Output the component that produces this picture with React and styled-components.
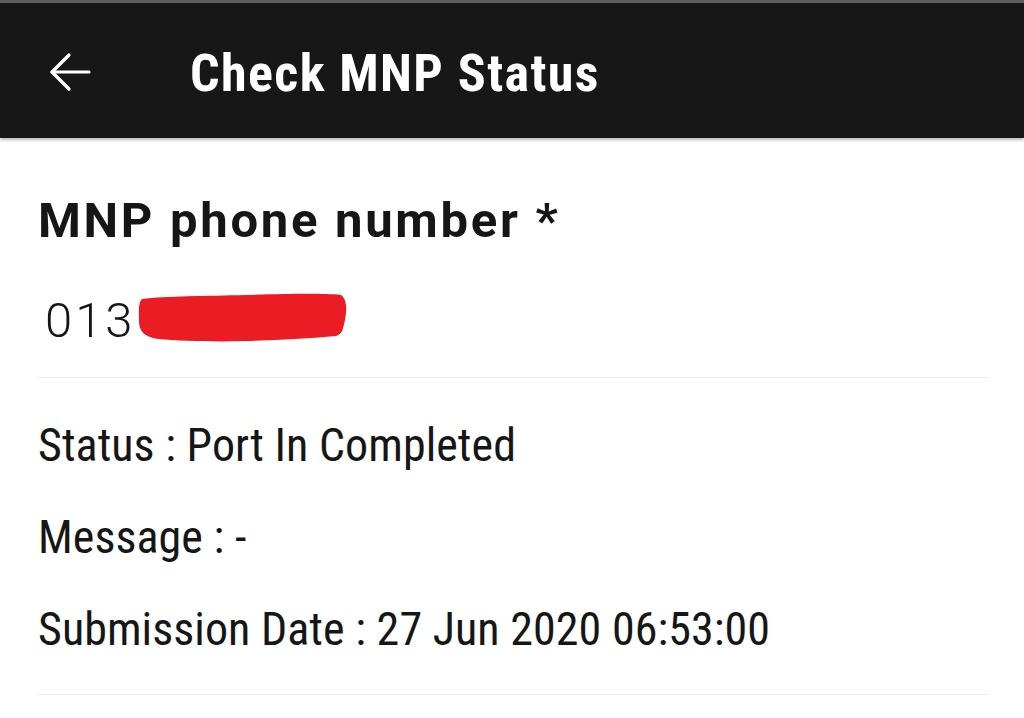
import styled, { createGlobalStyle } from 'styled-components'

// Check MNP Status — single screen, header + result card

const NARROW = `"Roboto Condensed", "Liberation Sans Narrow", Roboto, "Liberation Sans", sans-serif`
const WIDE = `Roboto, "Liberation Sans", sans-serif`

const Global = createGlobalStyle`
  html, body { margin: 0; padding: 0; background: #fff; }
  body { font-family: ${NARROW}; color: #161616; }
`

const Page = styled.div`
  width: 1024px;
  min-height: 718px;
  background: #fff;
`

const Header = styled.header`
  height: 135px;
  border-top: 3px solid #5e5e5e;
  background: #171717;
  box-shadow: 0 2px 3px rgba(0, 0, 0, 0.28);
  display: flex;
  align-items: flex-start;
  padding-left: 49px;
`

const BackButton = styled.button`
  width: 42px;
  height: 40px;
  margin-top: 49px;
  padding: 0;
  border: 0;
  background: none;
  color: #fff;
  display: flex;
`

const Title = styled.h1`
  margin: 45px 0 0 99px;
  font-size: 52px;
  line-height: 52px;
  font-weight: 700;
  letter-spacing: 1.4px;
  color: #fff;
`

const Body = styled.main`
  padding: 58px 36px 0 38px;
`

const Label = styled.div`
  font-family: ${WIDE};
  font-size: 49px;
  line-height: 49px;
  font-weight: 700;
  letter-spacing: 2.7px;
`

const ValueRow = styled.div`
  display: flex;
  align-items: flex-start;
  margin-top: 51px;
  padding-left: 7px;
  font-family: ${WIDE};
  font-size: 49px;
  line-height: 49px;
  font-weight: 300;
  letter-spacing: 3px;
`

const Redact = styled.svg`
  margin: -6px 0 0 0;
`

const Divider = styled.hr`
  margin: ${({ $top }) => $top}px 0 0;
  border: 0;
  height: 1px;
  background: #e8e8e8;
`

const InfoList = styled.div`
  display: flex;
  flex-direction: column;
  gap: 47px;
  margin-top: 45px;
`

const InfoLine = styled.div`
  font-size: 46px;
  line-height: 45px;
  letter-spacing: 0.05px;
`

const ArrowIcon = () => (
  <svg width="42" height="40" viewBox="0 0 42 40" fill="none" stroke="currentColor" strokeWidth="3.2" strokeLinecap="round" strokeLinejoin="round">
    <path d="M40 20H3" />
    <path d="M20 3L3 20l17 17" />
  </svg>
)

const info = [
  'Status : Port In Completed',
  'Message : -',
  'Submission Date : 27 Jun 2020 06:53:00',
]

const App = () => (
  <Page>
    <Global />
    <Header>
      <BackButton aria-label="Back"><ArrowIcon /></BackButton>
      <Title>Check MNP Status</Title>
    </Header>

    <Body>
      <Label>MNP phone number *</Label>
      <ValueRow>
        013
        <Redact width="212" height="54" viewBox="0 0 212 54">
          <path
            fill="#ec1c24"
            d="M6 9 C30 6 70 6 110 5 C150 4 185 3 205 5 C211 9 211 20 209 30 C207 38 207 44 200 46 C170 49 140 50 110 51 C80 52 45 51 22 49 C10 47 3 43 3 31 C3 21 2 13 6 9 Z"
          />
        </Redact>
      </ValueRow>
      <Divider $top={32} />

      <InfoList>
        {info.map(line => <InfoLine key={line}>{line}</InfoLine>)}
      </InfoList>
      <Divider $top={42} />
    </Body>
  </Page>
)

export default App
